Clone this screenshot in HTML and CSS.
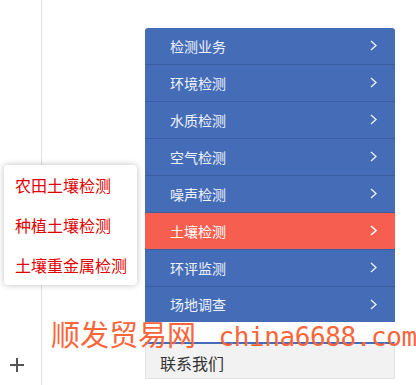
FILE: index.html
```html
<!DOCTYPE html>
<html lang="zh-CN">
<head>
  <meta charset="UTF-8">
  <title>检测业务</title>
  <link rel="stylesheet" href="styles.css">
</head>
<body>
  <div class="page">
    <aside class="side">
      <span class="side-plus">
        <svg width="14" height="14" viewBox="0 0 14 14"><path d="M7 0v14M0 7h14" stroke="#555" stroke-width="2"/></svg>
      </span>
    </aside>

    <main class="content">
      <ul class="nav">
        <li class="nav-item"><span>检测业务</span><i class="chev"><svg width="7" height="11" viewBox="0 0 7 11"><polyline points="1,1 6,5.5 1,10" fill="none" stroke="#e8eefb" stroke-width="1.4"/></svg></i></li>
        <li class="nav-item"><span>环境检测</span><i class="chev"><svg width="7" height="11" viewBox="0 0 7 11"><polyline points="1,1 6,5.5 1,10" fill="none" stroke="#e8eefb" stroke-width="1.4"/></svg></i></li>
        <li class="nav-item"><span>水质检测</span><i class="chev"><svg width="7" height="11" viewBox="0 0 7 11"><polyline points="1,1 6,5.5 1,10" fill="none" stroke="#e8eefb" stroke-width="1.4"/></svg></i></li>
        <li class="nav-item"><span>空气检测</span><i class="chev"><svg width="7" height="11" viewBox="0 0 7 11"><polyline points="1,1 6,5.5 1,10" fill="none" stroke="#e8eefb" stroke-width="1.4"/></svg></i></li>
        <li class="nav-item"><span>噪声检测</span><i class="chev"><svg width="7" height="11" viewBox="0 0 7 11"><polyline points="1,1 6,5.5 1,10" fill="none" stroke="#e8eefb" stroke-width="1.4"/></svg></i></li>
        <li class="nav-item active"><span>土壤检测</span><i class="chev"><svg width="7" height="11" viewBox="0 0 7 11"><polyline points="1,1 6,5.5 1,10" fill="none" stroke="#fff" stroke-width="1.6"/></svg></i></li>
        <li class="nav-item"><span>环评监测</span><i class="chev"><svg width="7" height="11" viewBox="0 0 7 11"><polyline points="1,1 6,5.5 1,10" fill="none" stroke="#e8eefb" stroke-width="1.4"/></svg></i></li>
        <li class="nav-item"><span>场地调查</span><i class="chev"><svg width="7" height="11" viewBox="0 0 7 11"><polyline points="1,1 6,5.5 1,10" fill="none" stroke="#e8eefb" stroke-width="1.4"/></svg></i></li>
      </ul>

      <div class="contact">联系我们</div>
    </main>

    <ul class="submenu">
      <li>农田土壤检测</li>
      <li>种植土壤检测</li>
      <li>土壤重金属检测</li>
    </ul>

    <div class="watermark">顺发贸易网 <span class="watermark-url">china6688.com</span></div>
  </div>
</body>
</html>
```

FILE: styles.css
```css
* {
  margin: 0;
  padding: 0;
  box-sizing: border-box;
}

body {
  font-family: 'Noto Sans CJK SC', 'Noto Sans', sans-serif;
  background: #fff;
  color: #333;
  overflow: hidden;
}

.page {
  position: relative;
  display: flex;
  height: 385px;
}

.side {
  width: 42px;
  border-right: 1px solid #e2e2e2;
  display: flex;
  flex-direction: column;
  justify-content: flex-end;
  align-items: flex-start;
  padding: 0 0 13px 10px;
}

.side-plus svg {
  display: block;
}

.content {
  padding: 28px 0 0 103px;
}

.nav {
  list-style: none;
  width: 250px;
  background-color: #456cb7;
  border-radius: 3px 3px 0 0;
  overflow: hidden;
}

.nav-item {
  height: 37px;
  display: flex;
  align-items: center;
  justify-content: space-between;
  padding: 0 18px 1px 25px;
  border-bottom: 1px solid #3a5d9f;
  color: #eef2fb;
  font-size: 14px;
}

.nav-item:last-child {
  border-bottom: none;
  height: 35px;
}

.nav-item.active {
  background-color: #f65f50;
  color: #fff;
}

.chev svg {
  display: block;
}

.contact {
  margin-top: 20px;
  width: 250px;
  height: 37px;
  border-top: 2px solid #456cb7;
  border-left: 1px solid #e2e2e2;
  border-right: 1px solid #e2e2e2;
  border-bottom: 1px solid #e2e2e2;
  background-color: #f2f2f2;
  padding: 8px 0 0 14px;
  line-height: 23px;
  font-size: 16px;
  color: #333;
}

.submenu {
  list-style: none;
  position: absolute;
  left: 4px;
  top: 165px;
  width: 133px;
  background-color: #fff;
  border-radius: 4px;
  box-shadow: 0 0 6px rgba(0, 0, 0, 0.25);
}

.submenu li {
  height: 40px;
  line-height: 40px;
  padding-left: 11px;
  font-size: 16px;
  color: #e30000;
}

.watermark {
  position: absolute;
  left: 51px;
  top: 319px;
  font-size: 29px;
  line-height: 29px;
  color: #fa653c;
  white-space: nowrap;
  pointer-events: none;
}

.watermark-url {
  margin-left: 16px;
  font-family: 'DejaVu Sans Mono', monospace;
  font-size: 26px;
  letter-spacing: -0.4px;
}
```
